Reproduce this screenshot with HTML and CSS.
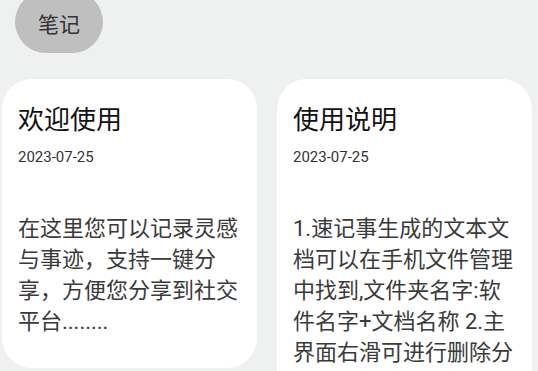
FILE: index.html
```html
<!DOCTYPE html>
<html lang="zh-CN">
<head>
<meta charset="utf-8">
<title>笔记</title>
<link rel="stylesheet" href="styles.css">
</head>
<body>
<div class="page">
  <div class="tabs">
    <div class="tab">笔记</div>
  </div>
  <div class="grid">
    <div class="card">
      <div class="title">欢迎使用</div>
      <div class="date">2023-07-25</div>
      <div class="text">在这里您可以记录灵感与事迹，支持一键分享，方便您分享到社交平台........</div>
    </div>
    <div class="card">
      <div class="title">使用说明</div>
      <div class="date">2023-07-25</div>
      <div class="text">1.速记事生成的文本文档可以在手机文件管理中找到,文件夹名字:软件名字+文档名称 2.主界面右滑可进行删除分享等操作</div>
    </div>
  </div>
</div>
</body>
</html>
```
FILE: styles.css
```css
html, body {
  margin: 0;
  padding: 0;
  height: 100%;
  overflow: hidden;
}
body {
  background: #eff0f0;
  font-family: Roboto, "Noto Sans CJK SC", sans-serif;
  color: #333333;
}
.page {
  display: flex;
  flex-direction: column;
}
.tabs {
  display: flex;
  padding-left: 15px;
  margin-top: -9px;
}
.tab {
  width: 88px;
  height: 62px;
  border-radius: 31px;
  background: #bfbfbf;
  color: #333333;
  font-size: 21px;
  display: flex;
  align-items: center;
  justify-content: center;
  padding-top: 2px;
  box-sizing: border-box;
}
.grid {
  display: grid;
  grid-template-columns: 255px 255px;
  column-gap: 20px;
  align-items: start;
  padding-left: 2px;
  margin-top: 26px;
}
.card {
  background: #ffffff;
  border-radius: 30px;
  padding: 24px 16px 31px 16px;
}
.title {
  font-size: 26px;
  line-height: 34px;
  color: #111111;
}
.date {
  font-size: 15px;
  line-height: 20px;
  margin-top: 10px;
  color: #333333;
}
.text {
  font-size: 22px;
  line-height: 31px;
  margin-top: 46px;
  color: #3a3a3a;
}
```
